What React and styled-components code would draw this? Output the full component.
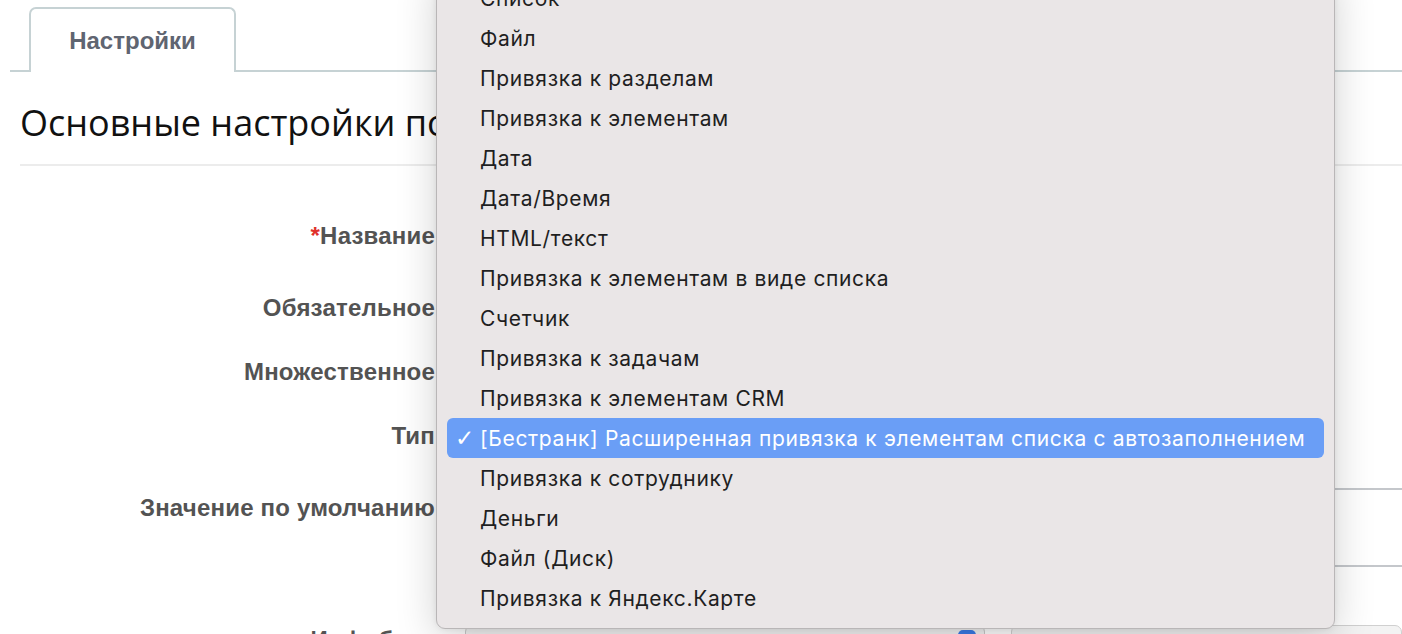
import React from "react";
import styled, { createGlobalStyle } from "styled-components";

const Global = createGlobalStyle`
  html, body { margin: 0; padding: 0; background: #fff; }
  body { overflow: hidden; width: 1402px; height: 634px; }
  #root { position: relative; width: 1402px; height: 634px; overflow: hidden; }
`;

const Page = styled.div`
  position: relative;
  width: 1402px;
  height: 634px;
  overflow: hidden;
  font-family: "Liberation Sans", Arial, sans-serif;
`;

const TabBar = styled.div`
  display: flex;
  margin-left: 10px;
  padding: 7px 0 0 19px;
  border-bottom: 2px solid #c6d2d4;
`;

const Tab = styled.div`
  width: 207px;
  height: 65px;
  box-sizing: border-box;
  border: 2px solid #c6d2d4;
  border-bottom: none;
  border-radius: 7px 7px 0 0;
  background: #fff;
  margin-bottom: -2px;
  display: flex;
  align-items: center;
  justify-content: center;
  font-weight: 700;
  font-size: 24px;
  color: #5f6571;
`;

const Heading = styled.h1`
  margin: 0 0 0 20px;
  padding: 28px 0 18px;
  font-family: "Open Sans", sans-serif;
  font-weight: 400;
  font-size: 36px;
  line-height: 46px;
  color: #111;
  border-bottom: 2px solid #ececec;
  white-space: nowrap;
`;

const Form = styled.div`
  display: flex;
  flex-direction: column;
  padding-top: 34px;
`;

const Row = styled.div`
  display: grid;
  grid-template-columns: 435px 1fr;
  column-gap: 30px;
  height: ${(p) => p.h}px;
  align-items: start;
`;

const Label = styled.div`
  text-align: right;
  font-weight: 700;
  font-size: 24px;
  line-height: 28px;
  letter-spacing: 0.2px;
  color: #535353;
  padding-top: ${(p) => p.top}px;
  white-space: nowrap;
`;

const Star = styled.span`
  color: #e0312b;
`;

const TextArea = styled.div`
  margin-top: 16px;
  height: 75px;
  width: calc(100% + 20px);
  border-top: 2px solid #c4c7cb;
  border-bottom: 2px solid #c4c7cb;
  border-left: 2px solid #c4c7cb;
`;

const SelectLine = styled.div`
  margin-top: 45px;
  display: flex;
  gap: 26px;
`;

const SelectBox = styled.div`
  position: relative;
  width: 518px;
  height: 30px;
  border: 1px solid #c9c9c9;
  border-radius: 7px;
  background: #f3f3f3;
`;

const SelectArrow = styled.div`
  position: absolute;
  right: 8px;
  top: 4px;
  width: 18px;
  height: 18px;
  border-radius: 5px;
  background: #3b7be8;
`;

const OtherBox = styled.div`
  flex: 1;
  height: 30px;
  border: 1px solid #d0d0d0;
  border-radius: 7px;
  background: #f3f3f3;
`;

const Menu = styled.ul`
  position: absolute;
  left: 436px;
  top: -33px;
  width: 899px;
  box-sizing: border-box;
  margin: 0;
  padding: 10px 10px;
  list-style: none;
  background: #eae6e7;
  border: 1px solid #b9b6b7;
  border-radius: 9px;
  box-shadow: 0 10px 40px rgba(0, 0, 0, 0.18), 0 0 6px rgba(0, 0, 0, 0.08);
  font-family: "Inter", "Noto Sans", sans-serif;
`;

const Item = styled.li`
  position: relative;
  height: 40px;
  display: flex;
  align-items: center;
  padding-left: 33px;
  border-radius: 6px;
  font-size: 21px;
  letter-spacing: 0.65px;
  color: ${(p) => (p.selected ? "#fff" : "#1f1f1f")};
  background: ${(p) => (p.selected ? "#6a9ef6" : "transparent")};
  white-space: nowrap;
`;

const Check = styled.span`
  position: absolute;
  left: 8px;
  top: 50%;
  transform: translateY(-50%);
  font-family: "DejaVu Sans", sans-serif;
  font-size: 23px;
  font-weight: 700;
  line-height: 1;
`;

const items = [
  "Список",
  "Файл",
  "Привязка к разделам",
  "Привязка к элементам",
  "Дата",
  "Дата/Время",
  "HTML/текст",
  "Привязка к элементам в виде списка",
  "Счетчик",
  "Привязка к задачам",
  "Привязка к элементам CRM",
  "[Бестранк] Расширенная привязка к элементам списка с автозаполнением",
  "Привязка к сотруднику",
  "Деньги",
  "Файл (Диск)",
  "Привязка к Яндекс.Карте",
];

const SELECTED = 11;

export default function App() {
  return (
    <Page>
      <Global />
      <TabBar>
        <Tab>Настройки</Tab>
      </TabBar>
      <Heading>Основные настройки поля</Heading>
      <Form>
        <Row h={72}>
          <Label top={22}>
            <Star>*</Star>Название
          </Label>
        </Row>
        <Row h={72}>
          <Label top={22}>Обязательное</Label>
        </Row>
        <Row h={56}>
          <Label top={14}>Множественное</Label>
        </Row>
        <Row h={72}>
          <Label top={22}>Тип</Label>
        </Row>
        <Row h={108}>
          <Label top={22}>Значение по умолчанию</Label>
          <TextArea />
        </Row>
        <Row h={80}>
          <Label top={46}>Инфоблок</Label>
          <SelectLine>
            <SelectBox>
              <SelectArrow />
            </SelectBox>
            <OtherBox />
          </SelectLine>
        </Row>
      </Form>
      <Menu>
        {items.map((t, i) => (
          <Item key={t} selected={i === SELECTED}>
            {i === SELECTED && <Check>✓</Check>}
            {t}
          </Item>
        ))}
      </Menu>
    </Page>
  );
}
